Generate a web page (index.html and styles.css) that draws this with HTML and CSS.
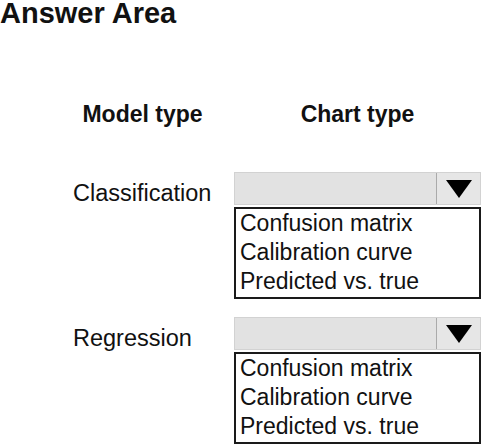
FILE: index.html
```html
<!DOCTYPE html>
<html>
<head>
<meta charset="utf-8">
<link rel="stylesheet" href="styles.css">
</head>
<body>
<div class="page">
  <h1 class="title">Answer Area</h1>
  <div class="grid">
    <div class="head">Model type</div>
    <div class="head">Chart type</div>

    <div class="label">Classification</div>
    <div class="drop">
      <div class="select">
        <div class="field"></div>
        <div class="btn"><span class="arrow"></span></div>
      </div>
      <ul class="list">
        <li>Confusion matrix</li>
        <li>Calibration curve</li>
        <li>Predicted vs. true</li>
      </ul>
    </div>

    <div class="label">Regression</div>
    <div class="drop">
      <div class="select">
        <div class="field"></div>
        <div class="btn"><span class="arrow"></span></div>
      </div>
      <ul class="list">
        <li>Confusion matrix</li>
        <li>Calibration curve</li>
        <li>Predicted vs. true</li>
      </ul>
    </div>
  </div>
</div>
</body>
</html>
```

FILE: styles.css
```css
html, body {
  margin: 0;
  padding: 0;
  background: #ffffff;
}

body {
  font-family: "Liberation Sans", Arial, sans-serif;
  color: #111111;
}

.page {
  width: 483px;
  height: 446px;
  overflow: hidden;
}

.title {
  margin: 0;
  font-size: 29px;
  line-height: 30px;
  font-weight: bold;
  margin-top: -2px;
}

.grid {
  display: grid;
  grid-template-columns: 139px 247px;
  column-gap: 22px;
  margin-left: 73px;
  margin-top: 72px;
}

.head {
  font-size: 23px;
  font-weight: bold;
  line-height: 28px;
  text-align: center;
  margin-bottom: 44px;
}

.label {
  font-size: 23.5px;
  line-height: 28px;
  padding-top: 7px;
  white-space: nowrap;
}

.drop {
  margin-bottom: 18px;
}

.select {
  display: flex;
  height: 33px;
  box-sizing: border-box;
  border: 1px solid #d2d2d2;
  background: #e2e2e2;
}

.field {
  flex: 1;
  border-right: 1px solid #aaaaaa;
}

.btn {
  width: 43px;
  display: flex;
  align-items: center;
  justify-content: center;
  background: #e6e6e6;
}

.arrow {
  width: 0;
  height: 0;
  border-left: 13px solid transparent;
  border-right: 13px solid transparent;
  border-top: 18px solid #000000;
  margin-top: 1px;
}

.list {
  list-style: none;
  margin: 2px 0 0 0;
  padding: 0 0 1px 4px;
  border: 2px solid #1a1a1a;
  font-size: 23px;
  line-height: 29px;
  color: #111111;
}

.list li {
  white-space: nowrap;
}
```
